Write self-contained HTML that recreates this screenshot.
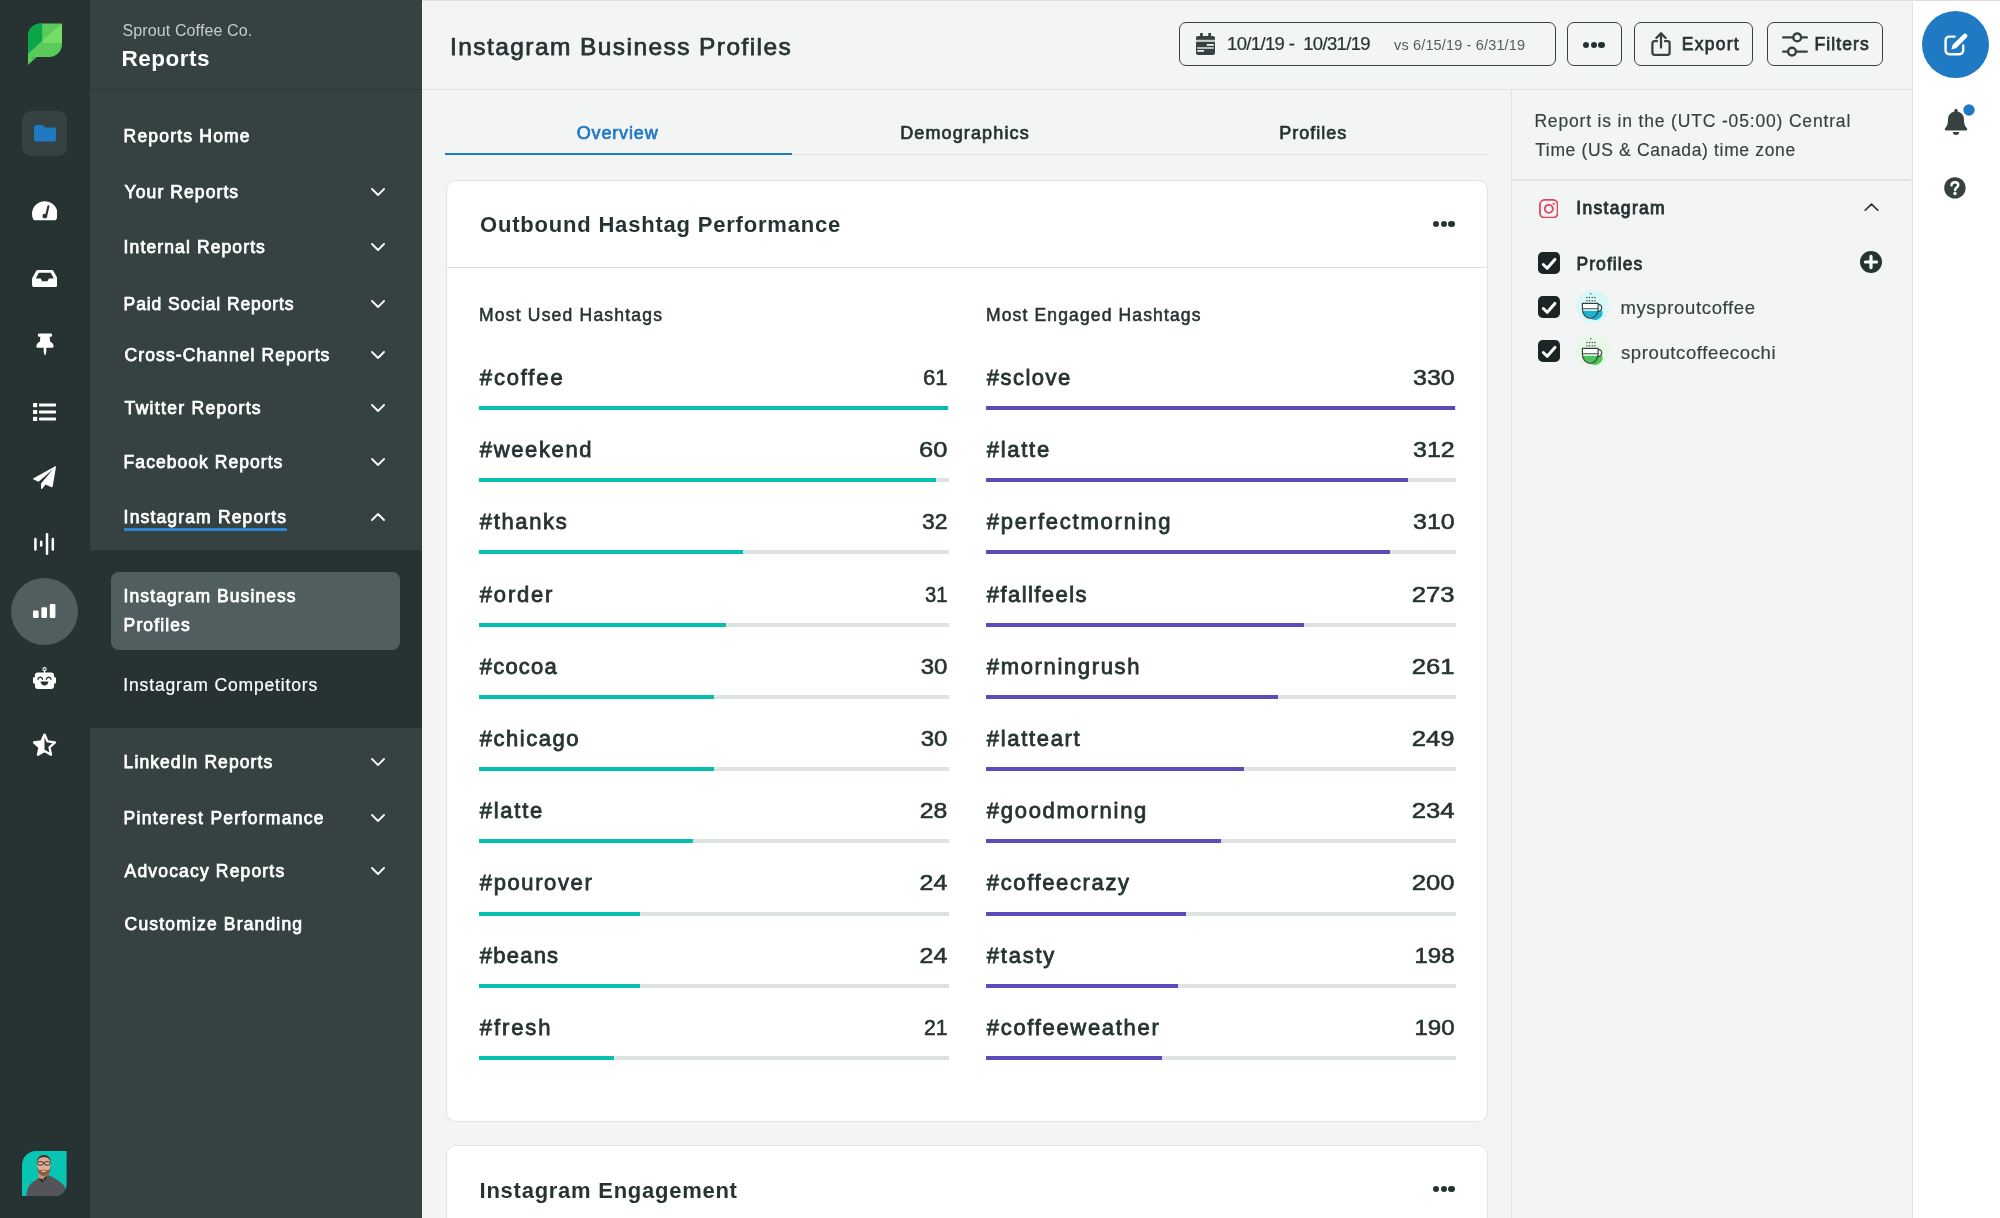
<!DOCTYPE html>
<html lang="en">
<head>
<meta charset="utf-8">
<title>Instagram Business Profiles - Reports</title>
<style>
*{box-sizing:border-box;margin:0;padding:0}
html,body{width:2000px;height:1218px;overflow:hidden;background:#f3f4f4}
body{font-family:"Liberation Sans",sans-serif;color:#273333;position:relative;will-change:transform}
.abs{position:absolute}
svg{display:block;position:absolute}
.t{position:absolute;display:block;white-space:pre;font-weight:normal;font-style:normal;text-decoration:none}
#rail{position:absolute;left:0;top:0;width:90px;height:1218px;background:#273333}
#side{position:absolute;left:90px;top:0;width:332px;height:1218px;background:#364141;color:#fff}
#side .hd{position:absolute;left:0;top:0;width:332px;height:90px;border-bottom:1px solid #2d3838}
#sub{position:absolute;left:0;top:550px;width:332px;height:178px;background:#273333}
#sub .act{position:absolute;left:21px;top:22px;width:289px;height:78px;border-radius:8px;background:#515e5f}
#main{position:absolute;left:422px;top:0;width:1490px;height:1218px;background:#f3f4f4}
#mhd{position:absolute;left:0;top:0;width:1490px;height:90px;border-bottom:1.5px solid #dee1e1;box-shadow:inset 0 1px 0 #dcdfdf}
.btn{position:absolute;top:22.400px;height:43.600px;border:1.600px solid #364141;border-radius:7px}
.card{position:absolute;left:24px;width:1042px;background:#fff;border:1px solid #e0e3e3;border-radius:10px}
.card>*{margin:-1px 0 0 -1px}
.dots{position:absolute;width:22px;height:6.4px}
.dots i{position:absolute;top:0;width:6.4px;height:6.4px;border-radius:50%;background:#273333}
.dots i:nth-child(1){left:0}.dots i:nth-child(2){left:7.6px}.dots i:nth-child(3){left:15.2px}
.hr{position:absolute;height:1px;background:#dee1e1}
.trk{position:absolute;width:469.600px;height:4px;background:#dfe2e2}
.bar{position:absolute;height:4px}
.bar.g{background:#06c0af}.bar.p{background:#5c4cba}
#fp{position:absolute;left:1089px;top:90px;width:401px;height:1128px;border-left:1.500px solid #dfe2e2}
#rr{position:absolute;left:1912px;top:0;width:88px;height:1218px;background:#fff;border-left:1.5px solid #e3e6e6;box-shadow:inset 0 1px 0 #dcdfdf}
</style>
</head>
<body>
<nav id="rail" aria-label="Primary">
  <svg style="left:27px;top:23px" width="36" height="43" viewBox="0 0 36 43">
    <path d="M1 42 V13.5 C1 6 6.5 0.5 14 0.5 H35 V21 C35 28.5 29.5 34 22 34 H9.5 Z" fill="#59cb59"/>
    <path d="M1 31 V13.5 C1 6 6.5 0.5 14 0.5 H15.2 V17.6 Z" fill="#0ca54a"/>
    <path d="M15.2 17.6 L35 0.5 V20 H17.5 Z" fill="#75dd66"/>
    <path d="M3.5 34.2 H9.6 L7.4 36.2 Z" fill="#2bb656"/>
  </svg>
  <div class="abs" style="left:22px;top:111px;width:45px;height:45px;border-radius:9px;background:#364141"></div>
  <svg style="left:33.5px;top:125px" width="22" height="16.5" viewBox="0 0 23 17"><path d="M2 0 H8.2 C8.8 0 9.3 .2 9.7 .6 L11.6 2.6 H21 C22.1 2.6 23 3.500 23 4.600 V15 C23 16.100 22.100 17 21 17 H2 C.9 17 0 16.100 0 15 V2 C0 .9 .9 0 2 0 Z" fill="#2079c3"/></svg>
  <svg style="left:31.7px;top:201px" width="25.6" height="19.6" viewBox="0 0 27 20"><path d="M13.5 0 C6 0 0 6 0 13.4 C0 15.4 .45 17.3 1.25 19 C1.5 19.6 2.1 20 2.800 20 H24.200 C24.900 20 25.500 19.600 25.750 19 C26.550 17.300 27 15.400 27 13.400 C27 6 21 0 13.500 0 Z" fill="#fff"/><path d="M17.3 5.2 L15.2 14.2" stroke="#273333" stroke-width="2.2" stroke-linecap="round"/><circle cx="13.6" cy="15.6" r="2.6" fill="#273333"/></svg>
  <svg style="left:31.7px;top:269.5px" width="25.6" height="17" viewBox="0 0 27 18"><path d="M6.2 0 H20.8 C21.6 0 22.3 .4 22.7 1.1 L26.6 8.3 C26.9 8.8 27 9.3 27 9.8 V15.800 C27 17 26 18 24.800 18 H2.200 C1 18 0 17 0 15.800 V9.800 C0 9.300 .1 8.800 .4 8.300 L4.300 1.100 C4.700 .4 5.400 0 6.200 0 Z M7.200 3 L4 9 H9.200 L10.700 11.800 H16.300 L17.800 9 H23 L19.800 3 Z" fill="#fff" fill-rule="evenodd"/></svg>
  <svg style="left:35.5px;top:333px" width="18" height="22.6" viewBox="0 0 19 23"><path d="M3.4 0 H15.6 C16.4 0 17 .6 17 1.4 V2.2 C17 3 16.4 3.6 15.6 3.6 H14.4 L14.9 8.6 C17 9.7 18.6 11.600 18.600 13.900 C18.600 14.600 18.100 15.100 17.400 15.100 H10.900 V19.600 L9.900 22.700 C9.800 23.100 9.200 23.100 9.100 22.700 L8.100 19.600 V15.100 H1.600 C.9 15.100 .4 14.600 .4 13.900 C.4 11.600 2 9.700 4.100 8.600 L4.600 3.600 H3.400 C2.600 3.600 2 3 2 2.200 V1.400 C2 .6 2.600 0 3.400 0 Z" fill="#fff"/></svg>
  <svg style="left:33px;top:403px" width="23" height="18" viewBox="0 0 23 18"><g fill="#fff"><rect x="0" y="0" width="4.2" height="4.2" rx=".6"/><rect x="6" y=".6" width="17" height="3" rx=".7"/><rect x="0" y="6.9" width="4.2" height="4.2" rx=".6"/><rect x="6" y="7.5" width="17" height="3" rx=".7"/><rect x="0" y="13.8" width="4.2" height="4.2" rx=".6"/><rect x="6" y="14.4" width="17" height="3" rx=".7"/></g></svg>
  <svg style="left:33px;top:466px" width="23" height="23" viewBox="0 0 23 23"><path d="M22.3 .2 C22.7 0 23.1 .3 23 .8 L19.7 20.6 C19.6 21.1 19.1 21.3 18.7 21.2 L12.5 18.6 L9.2 22.7 C8.8 23.2 8 22.9 8 22.3 V17.4 L20 3.2 L5.6 15.700 L.6 13.600 C0 13.300 -.1 12.500 .5 12.200 Z" fill="#fff"/></svg>
  <svg style="left:34px;top:533px" width="21" height="22" viewBox="0 0 21 22"><g stroke="#fff" stroke-width="2.5" stroke-linecap="round"><path d="M1.4 6 V16.5"/><path d="M7.2 8.8 V12.6"/><path d="M13 1.200 V20.800"/><path d="M18.800 6 V16.500"/></g></svg>
  <div class="abs" style="left:11px;top:578px;width:67px;height:67px;border-radius:50%;background:#515e5f"></div>
  <svg style="left:33px;top:604px" width="23" height="14" viewBox="0 0 23 14"><g fill="#fff"><rect x="0" y="6.6" width="5.6" height="7.4" rx="1.1"/><rect x="8.4" y="3.2" width="5.6" height="10.8" rx="1.1"/><rect x="16.800" y="0" width="5.600" height="14" rx="1.100"/></g></svg>
  <svg style="left:33px;top:667px" width="23" height="22" viewBox="0 0 23 22"><circle cx="11.5" cy="2.2" r="1.6" fill="none" stroke="#fff" stroke-width="1.1"/><path d="M11.5 3.6 V6" stroke="#fff" stroke-width="1.2"/><path d="M4.6 5.6 H18.4 C19.9 5.6 21.1 6.8 21.1 8.3 V10.2 H22 C22.6 10.2 23 10.600 23 11.200 V15.400 C23 16 22.600 16.400 22 16.400 H21.100 V19.300 C21.100 20.800 19.900 22 18.400 22 H4.600 C3.100 22 1.900 20.800 1.900 19.300 V16.400 H1 C.4 16.400 0 16 0 15.400 V11.200 C0 10.600 .4 10.200 1 10.200 H1.900 V8.300 C1.900 6.800 3.100 5.600 4.600 5.600 Z" fill="#fff"/><path d="M5 12.200 C5.300 10.900 6.200 10.200 7.300 10.200 C8.400 10.200 9.300 10.900 9.600 12.200" fill="none" stroke="#273333" stroke-width="1.4" stroke-linecap="round"/><path d="M13.400 12.200 C13.700 10.900 14.600 10.200 15.700 10.200 C16.800 10.200 17.700 10.900 18 12.200" fill="none" stroke="#273333" stroke-width="1.4" stroke-linecap="round"/><path d="M7.600 14.600 H15.400 C15.400 16.900 13.700 18.600 11.500 18.600 C9.300 18.600 7.600 16.900 7.600 14.600 Z" fill="#273333"/></svg>
  <svg style="left:32px;top:733px" width="25" height="24" viewBox="0 0 25 24"><path d="M12.5 1.600 L15.600 8.400 L23 9.300 L17.500 14.400 L19 21.700 L12.500 18 L6 21.700 L7.500 14.400 L2 9.300 L9.400 8.400 Z" fill="none" stroke="#fff" stroke-width="2.3" stroke-linejoin="round"/><path d="M12.500 1.600 L9.400 8.400 L2 9.300 L7.500 14.400 L6 21.700 L12.500 18 Z" fill="#fff"/></svg>
  <svg style="left:22px;top:1151px" width="45" height="45" viewBox="0 0 45 45"><defs><clipPath id="avc"><path d="M14 0 H44.600 V33 C44.600 39.600 39.200 45 32.600 45 H0 V14 C0 6.300 6.300 0 14 0 Z"/></clipPath></defs><g clip-path="url(#avc)"><rect width="45" height="45" fill="#08c4b2"/><path d="M4.300 45 C4.800 39 6 35.500 9 32.500 L16.500 27 L21 29.500 L26.500 24 L33 27.500 C38 30.500 41.500 33.500 43.600 37 L43.600 45 Z" fill="#55545a"/><path d="M16.600 21 H26.500 V25 L21 30 L16.600 27 Z" fill="#c98f72"/><path d="M15.800 27.600 L20.800 31.800 L21.400 28 Z M26.800 23.600 L22 30.800 L21.600 27 Z" fill="#2f2e33"/><ellipse cx="21.800" cy="13.200" rx="6.900" ry="8.600" fill="#dfae95"/><path d="M14.900 11.600 C14 1.500 29.800 1.500 28.800 11.600 C27.400 7 25 6.200 21.800 6.200 C18.600 6.200 16.400 7 14.900 11.600 Z" fill="#49342a"/><path d="M15 14.500 C14.600 28.500 29.400 28.500 28.700 14.500 C28 18.500 26.500 19.600 25 19.200 C23 18.600 20.600 18.600 18.600 19.200 C17.100 19.600 15.700 18.500 15 14.500 Z" fill="#8c5b3e"/><path d="M19.200 19.800 C20.600 21.400 23 21.400 24.400 19.800 Z" fill="#f3e6df"/><rect x="15.600" y="10.600" width="5.400" height="3.500" rx="1.300" fill="none" stroke="#2b2b2e" stroke-width=".9"/><rect x="22.600" y="10.600" width="5.400" height="3.500" rx="1.300" fill="none" stroke="#2b2b2e" stroke-width=".9"/><path d="M21 12 H22.600" stroke="#2b2b2e" stroke-width=".8"/></g></svg>
</nav>
<aside id="side">
  <div class="hd"><p class="t" style="font-size:16px;line-height:21px;left:32.50px;top:19.71px;letter-spacing:0.120px;color:#c5cccc;">Sprout Coffee Co.</p><h2 class="t" style="font-size:22.5px;line-height:29px;left:31.50px;top:43.95px;letter-spacing:0.500px;font-weight:bold;color:#fff;">Reports</h2></div>
  <a class="t nav" style="font-size:17.5px;line-height:23px;left:33.62px;top:125.04px;letter-spacing:1.197px;color:#fff;-webkit-text-stroke:0.75px #fff;">Reports Home</a>
  <a class="t nav" style="font-size:17.5px;line-height:23px;left:34.62px;top:180.54px;letter-spacing:1.091px;color:#fff;-webkit-text-stroke:0.75px #fff;">Your Reports</a>
  <svg style="left:281px;top:187.5px" width="14" height="8" viewBox="0 0 14 8"><path d="M1 1 L7 7 L13 1" fill="none" stroke="#fff" stroke-width="1.8" stroke-linecap="round" stroke-linejoin="round"/></svg>
  <a class="t nav" style="font-size:17.5px;line-height:23px;left:33.62px;top:236.04px;letter-spacing:1.116px;color:#fff;-webkit-text-stroke:0.75px #fff;">Internal Reports</a>
  <svg style="left:281px;top:243px" width="14" height="8" viewBox="0 0 14 8"><path d="M1 1 L7 7 L13 1" fill="none" stroke="#fff" stroke-width="1.8" stroke-linecap="round" stroke-linejoin="round"/></svg>
  <a class="t nav" style="font-size:17.5px;line-height:23px;left:33.62px;top:292.54px;letter-spacing:0.906px;color:#fff;-webkit-text-stroke:0.75px #fff;">Paid Social Reports</a>
  <svg style="left:281px;top:299.5px" width="14" height="8" viewBox="0 0 14 8"><path d="M1 1 L7 7 L13 1" fill="none" stroke="#fff" stroke-width="1.8" stroke-linecap="round" stroke-linejoin="round"/></svg>
  <a class="t nav" style="font-size:17.5px;line-height:23px;left:34.62px;top:343.79px;letter-spacing:1.095px;color:#fff;-webkit-text-stroke:0.75px #fff;">Cross-Channel Reports</a>
  <svg style="left:281px;top:350.75px" width="14" height="8" viewBox="0 0 14 8"><path d="M1 1 L7 7 L13 1" fill="none" stroke="#fff" stroke-width="1.8" stroke-linecap="round" stroke-linejoin="round"/></svg>
  <a class="t nav" style="font-size:17.5px;line-height:23px;left:34.62px;top:396.79px;letter-spacing:1.309px;color:#fff;-webkit-text-stroke:0.75px #fff;">Twitter Reports</a>
  <svg style="left:281px;top:403.75px" width="14" height="8" viewBox="0 0 14 8"><path d="M1 1 L7 7 L13 1" fill="none" stroke="#fff" stroke-width="1.8" stroke-linecap="round" stroke-linejoin="round"/></svg>
  <a class="t nav" style="font-size:17.5px;line-height:23px;left:33.62px;top:450.54px;letter-spacing:1.051px;color:#fff;-webkit-text-stroke:0.75px #fff;">Facebook Reports</a>
  <svg style="left:281px;top:457.5px" width="14" height="8" viewBox="0 0 14 8"><path d="M1 1 L7 7 L13 1" fill="none" stroke="#fff" stroke-width="1.8" stroke-linecap="round" stroke-linejoin="round"/></svg>
  <a class="t nav" style="font-size:17.5px;line-height:23px;left:33.62px;top:505.54px;letter-spacing:1.160px;color:#fff;-webkit-text-stroke:0.75px #fff;">Instagram Reports</a>
  <svg style="left:281px;top:512.5px" width="14" height="8" viewBox="0 0 14 8"><path d="M1 7 L7 1 L13 7" fill="none" stroke="#fff" stroke-width="1.8" stroke-linecap="round" stroke-linejoin="round"/></svg>
  <a class="t nav" style="font-size:17.5px;line-height:23px;left:33.62px;top:750.94px;letter-spacing:1.083px;color:#fff;-webkit-text-stroke:0.75px #fff;">LinkedIn Reports</a>
  <svg style="left:281px;top:757.9px" width="14" height="8" viewBox="0 0 14 8"><path d="M1 1 L7 7 L13 1" fill="none" stroke="#fff" stroke-width="1.8" stroke-linecap="round" stroke-linejoin="round"/></svg>
  <a class="t nav" style="font-size:17.5px;line-height:23px;left:33.62px;top:807.04px;letter-spacing:1.286px;color:#fff;-webkit-text-stroke:0.75px #fff;">Pinterest Performance</a>
  <svg style="left:281px;top:814px" width="14" height="8" viewBox="0 0 14 8"><path d="M1 1 L7 7 L13 1" fill="none" stroke="#fff" stroke-width="1.8" stroke-linecap="round" stroke-linejoin="round"/></svg>
  <a class="t nav" style="font-size:17.5px;line-height:23px;left:34.62px;top:860.04px;letter-spacing:1.169px;color:#fff;-webkit-text-stroke:0.75px #fff;">Advocacy Reports</a>
  <svg style="left:281px;top:867px" width="14" height="8" viewBox="0 0 14 8"><path d="M1 1 L7 7 L13 1" fill="none" stroke="#fff" stroke-width="1.8" stroke-linecap="round" stroke-linejoin="round"/></svg>
  <a class="t nav" style="font-size:17.5px;line-height:23px;left:34.62px;top:913.04px;letter-spacing:1.168px;color:#fff;-webkit-text-stroke:0.75px #fff;">Customize Branding</a>
  <div class="abs" style="left:34px;top:527.500px;width:163px;height:3px;background:#2b87d3"></div>
  <div id="sub"><div class="act"></div><a class="t nav" style="font-size:17.5px;line-height:23px;left:33.62px;top:34.74px;letter-spacing:1.078px;color:#fff;-webkit-text-stroke:0.75px #fff;">Instagram Business</a><a class="t nav" style="font-size:17.5px;line-height:23px;left:33.62px;top:63.74px;letter-spacing:1.128px;color:#fff;-webkit-text-stroke:0.75px #fff;">Profiles</a><a class="t nav" style="font-size:17.5px;line-height:23px;left:33.35px;top:123.74px;letter-spacing:0.840px;color:#fff;-webkit-text-stroke:0.2px #fff;">Instagram Competitors</a></div>
</aside>
<main id="main">
  <header id="mhd"><h1 class="t" style="font-size:24.5px;line-height:32px;left:28.07px;top:31.11px;letter-spacing:1.425px;color:#273333;-webkit-text-stroke:0.75px #273333;">Instagram Business Profiles</h1>
    <div class="btn" style="left:757px;width:376.500px">
      <svg style="left:15.500px;top:9.200px" width="19" height="22" viewBox="0 0 19 22"><path d="M4.100 0 H6.800 V2.900 H12.300 V0 H15 V2.900 H17 C18.100 2.900 19 3.800 19 4.900 V20 C19 21.100 18.100 22 17 22 H2 C.9 22 0 21.100 0 20 V4.900 C0 3.800 .9 2.900 2 2.900 H4.100 Z" fill="#364141"/><rect x="0" y="6.800" width="19" height="2.100" fill="#c9cdcd"/><rect x="10.800" y="11" width="7" height="1.800" fill="#f1f2f2"/><rect x="1.200" y="14.100" width="16.600" height="1.800" fill="#c9cdcd"/><rect x="1.200" y="17" width="6.900" height="1.800" fill="#eceeee"/></svg>
      <span class="t" style="font-size:18.5px;line-height:24px;left:47.00px;top:8.79px;letter-spacing:-0.652px;color:#273333;-webkit-text-stroke:0.2px #273333;">10/1/19 -  10/31/19</span><span class="t" style="font-size:14.5px;line-height:19px;left:214.00px;top:12.68px;letter-spacing:0.152px;color:#515e5f;">vs 6/15/19 - 6/31/19</span>
    </div>
    <div class="btn" style="left:1145px;width:55px"><div class="dots" style="left:15px;top:18.500px"><i></i><i></i><i></i></div></div>
    <div class="btn" style="left:1212px;width:119px">
      <svg style="left:15.800px;top:8.300px" width="20" height="24" viewBox="0 0 20 24"><g fill="none" stroke="#364141" stroke-width="2.300" stroke-linecap="round" stroke-linejoin="round"><path d="M6 9.200 H3.400 C2.300 9.200 1.400 10.100 1.400 11.200 V20.800 C1.400 21.900 2.300 22.800 3.400 22.800 H16.600 C17.700 22.800 18.600 21.900 18.600 20.800 V11.200 C18.600 10.100 17.700 9.200 16.600 9.200 H14"/><path d="M10 15.600 V1.600"/><path d="M5.400 6 L10 1.400 L14.600 6"/></g></svg>
      <span class="t" style="font-size:17.5px;line-height:23px;left:46.78px;top:9.54px;letter-spacing:1.267px;color:#273333;-webkit-text-stroke:0.75px #273333;">Export</span>
    </div>
    <div class="btn" style="left:1345px;width:116px">
      <svg style="left:13.600px;top:8.400px" width="26" height="25" viewBox="0 0 26 25"><g fill="none" stroke="#364141" stroke-width="2.400" stroke-linecap="round"><path d="M1.200 5.400 H11.200 M19.200 5.400 H24.800"/><circle cx="15.200" cy="5.400" r="3.900"/><path d="M1.200 19.600 H6 M14 19.600 H24.800"/><circle cx="10" cy="19.600" r="3.900"/></g></svg>
      <span class="t" style="font-size:17.5px;line-height:23px;left:46.58px;top:9.54px;letter-spacing:1.094px;color:#273333;-webkit-text-stroke:0.75px #273333;">Filters</span>
    </div>
  </header>
  <div class="hr" style="left:23px;top:154px;width:1043px"></div>
  <div class="abs" style="left:23px;top:153px;width:347px;height:2px;background:#2079c3"></div>
  <a class="t" style="font-size:18px;line-height:23px;left:154.75px;top:121.76px;letter-spacing:0.841px;color:#2079c3;-webkit-text-stroke:0.7px #2079c3;">Overview</a><a class="t" style="font-size:18px;line-height:23px;left:478.15px;top:121.76px;letter-spacing:1.132px;color:#273333;-webkit-text-stroke:0.7px #273333;">Demographics</a><a class="t" style="font-size:18px;line-height:23px;left:857.35px;top:121.76px;letter-spacing:0.983px;color:#273333;-webkit-text-stroke:0.7px #273333;">Profiles</a>
  <section class="card" style="top:180px;height:942px">
    <h2 class="t" style="font-size:22px;line-height:29px;left:34.00px;top:29.88px;letter-spacing:0.802px;font-weight:bold;color:#273333;">Outbound Hashtag Performance</h2>
    <div class="dots" style="left:987px;top:41px"><i></i><i></i><i></i></div>
    <div class="hr" style="left:0;top:87px;width:1042px"></div>
    <h3 class="t" style="font-size:17.5px;line-height:23px;left:32.97px;top:123.84px;letter-spacing:1.210px;color:#273333;-webkit-text-stroke:0.55px #273333;">Most Used Hashtags</h3><h3 class="t" style="font-size:17.5px;line-height:23px;left:540.02px;top:123.84px;letter-spacing:1.140px;color:#273333;-webkit-text-stroke:0.55px #273333;">Most Engaged Hashtags</h3>
    <b class="t lab" style="font-size:22px;line-height:29px;left:33.80px;top:182.88px;letter-spacing:1.844px;color:#273333;-webkit-text-stroke:0.8px #273333;">#coffee</b><span class="t val" style="font-size:22px;line-height:29px;left:476.69px;top:182.88px;width:24.97px;transform:scaleX(1.0048);transform-origin:100% 50%;color:#273333;-webkit-text-stroke:0.55px #273333;">61</span>
    <div class="trk" style="left:33.300px;top:226.0px"></div><div class="bar g" style="left:33.300px;top:226.0px;width:468.7px"></div>
    <b class="t lab" style="font-size:22px;line-height:29px;left:33.80px;top:255.10px;letter-spacing:1.634px;color:#273333;-webkit-text-stroke:0.8px #273333;">#weekend</b><span class="t val" style="font-size:22px;line-height:29px;left:476.78px;top:255.10px;width:24.97px;transform:scaleX(1.1604);transform-origin:100% 50%;color:#273333;-webkit-text-stroke:0.55px #273333;">60</span>
    <div class="trk" style="left:33.300px;top:298.2px"></div><div class="bar g" style="left:33.300px;top:298.2px;width:456.7px"></div>
    <b class="t lab" style="font-size:22px;line-height:29px;left:33.80px;top:327.32px;letter-spacing:1.641px;color:#273333;-webkit-text-stroke:0.8px #273333;">#thanks</b><span class="t val" style="font-size:22px;line-height:29px;left:476.79px;top:327.32px;width:24.97px;transform:scaleX(1.0450);transform-origin:100% 50%;color:#273333;-webkit-text-stroke:0.55px #273333;">32</span>
    <div class="trk" style="left:33.300px;top:370.4px"></div><div class="bar g" style="left:33.300px;top:370.4px;width:263.7px"></div>
    <b class="t lab" style="font-size:22px;line-height:29px;left:33.80px;top:399.54px;letter-spacing:1.806px;color:#273333;-webkit-text-stroke:0.8px #273333;">#order</b><span class="t val" style="font-size:22px;line-height:29px;left:476.69px;top:399.54px;width:24.97px;transform:scaleX(0.9159);transform-origin:100% 50%;color:#273333;-webkit-text-stroke:0.55px #273333;">31</span>
    <div class="trk" style="left:33.300px;top:442.7px"></div><div class="bar g" style="left:33.300px;top:442.7px;width:247.0px"></div>
    <b class="t lab" style="font-size:22px;line-height:29px;left:33.80px;top:471.76px;letter-spacing:1.199px;color:#273333;-webkit-text-stroke:0.8px #273333;">#cocoa</b><span class="t val" style="font-size:22px;line-height:29px;left:476.79px;top:471.76px;width:24.97px;transform:scaleX(1.0934);transform-origin:100% 50%;color:#273333;-webkit-text-stroke:0.55px #273333;">30</span>
    <div class="trk" style="left:33.300px;top:514.9px"></div><div class="bar g" style="left:33.300px;top:514.9px;width:234.7px"></div>
    <b class="t lab" style="font-size:22px;line-height:29px;left:33.80px;top:543.98px;letter-spacing:1.510px;color:#273333;-webkit-text-stroke:0.8px #273333;">#chicago</b><span class="t val" style="font-size:22px;line-height:29px;left:476.79px;top:543.98px;width:24.97px;transform:scaleX(1.0934);transform-origin:100% 50%;color:#273333;-webkit-text-stroke:0.55px #273333;">30</span>
    <div class="trk" style="left:33.300px;top:587.1px"></div><div class="bar g" style="left:33.300px;top:587.1px;width:234.7px"></div>
    <b class="t lab" style="font-size:22px;line-height:29px;left:33.80px;top:616.20px;letter-spacing:1.723px;color:#273333;-webkit-text-stroke:0.8px #273333;">#latte</b><span class="t val" style="font-size:22px;line-height:29px;left:476.78px;top:616.20px;width:24.97px;transform:scaleX(1.1267);transform-origin:100% 50%;color:#273333;-webkit-text-stroke:0.55px #273333;">28</span>
    <div class="trk" style="left:33.300px;top:659.3px"></div><div class="bar g" style="left:33.300px;top:659.3px;width:213.7px"></div>
    <b class="t lab" style="font-size:22px;line-height:29px;left:33.80px;top:688.42px;letter-spacing:1.608px;color:#273333;-webkit-text-stroke:0.8px #273333;">#pourover</b><span class="t val" style="font-size:22px;line-height:29px;left:476.98px;top:688.42px;width:24.97px;transform:scaleX(1.1352);transform-origin:100% 50%;color:#273333;-webkit-text-stroke:0.55px #273333;">24</span>
    <div class="trk" style="left:33.300px;top:731.5px"></div><div class="bar g" style="left:33.300px;top:731.5px;width:160.7px"></div>
    <b class="t lab" style="font-size:22px;line-height:29px;left:33.80px;top:760.64px;letter-spacing:1.225px;color:#273333;-webkit-text-stroke:0.8px #273333;">#beans</b><span class="t val" style="font-size:22px;line-height:29px;left:476.98px;top:760.64px;width:24.97px;transform:scaleX(1.1352);transform-origin:100% 50%;color:#273333;-webkit-text-stroke:0.55px #273333;">24</span>
    <div class="trk" style="left:33.300px;top:803.8px"></div><div class="bar g" style="left:33.300px;top:803.8px;width:160.7px"></div>
    <b class="t lab" style="font-size:22px;line-height:29px;left:33.80px;top:832.86px;letter-spacing:1.898px;color:#273333;-webkit-text-stroke:0.8px #273333;">#fresh</b><span class="t val" style="font-size:22px;line-height:29px;left:476.69px;top:832.86px;width:24.97px;transform:scaleX(0.9628);transform-origin:100% 50%;color:#273333;-webkit-text-stroke:0.55px #273333;">21</span>
    <div class="trk" style="left:33.300px;top:876.0px"></div><div class="bar g" style="left:33.300px;top:876.0px;width:134.4px"></div>
    <b class="t lab" style="font-size:22px;line-height:29px;left:540.80px;top:182.88px;letter-spacing:1.474px;color:#273333;-webkit-text-stroke:0.8px #273333;">#sclove</b><span class="t val" style="font-size:22px;line-height:29px;left:971.65px;top:182.88px;width:37.21px;transform:scaleX(1.1345);transform-origin:100% 50%;color:#273333;-webkit-text-stroke:0.55px #273333;">330</span>
    <div class="trk" style="left:540.300px;top:226.0px"></div><div class="bar p" style="left:540.300px;top:226.0px;width:469.1px"></div>
    <b class="t lab" style="font-size:22px;line-height:29px;left:540.80px;top:255.10px;letter-spacing:1.703px;color:#273333;-webkit-text-stroke:0.8px #273333;">#latte</b><span class="t val" style="font-size:22px;line-height:29px;left:971.65px;top:255.10px;width:37.21px;transform:scaleX(1.1345);transform-origin:100% 50%;color:#273333;-webkit-text-stroke:0.55px #273333;">312</span>
    <div class="trk" style="left:540.300px;top:298.2px"></div><div class="bar p" style="left:540.300px;top:298.2px;width:421.7px"></div>
    <b class="t lab" style="font-size:22px;line-height:29px;left:540.80px;top:327.32px;letter-spacing:1.769px;color:#273333;-webkit-text-stroke:0.8px #273333;">#perfectmorning</b><span class="t val" style="font-size:22px;line-height:29px;left:971.65px;top:327.32px;width:37.21px;transform:scaleX(1.1345);transform-origin:100% 50%;color:#273333;-webkit-text-stroke:0.55px #273333;">310</span>
    <div class="trk" style="left:540.300px;top:370.4px"></div><div class="bar p" style="left:540.300px;top:370.4px;width:403.7px"></div>
    <b class="t lab" style="font-size:22px;line-height:29px;left:540.80px;top:399.54px;letter-spacing:1.430px;color:#273333;-webkit-text-stroke:0.8px #273333;">#fallfeels</b><span class="t val" style="font-size:22px;line-height:29px;left:971.65px;top:399.54px;width:37.21px;transform:scaleX(1.1660);transform-origin:100% 50%;color:#273333;-webkit-text-stroke:0.55px #273333;">273</span>
    <div class="trk" style="left:540.300px;top:442.7px"></div><div class="bar p" style="left:540.300px;top:442.7px;width:317.7px"></div>
    <b class="t lab" style="font-size:22px;line-height:29px;left:540.80px;top:471.76px;letter-spacing:1.647px;color:#273333;-webkit-text-stroke:0.8px #273333;">#morningrush</b><span class="t val" style="font-size:22px;line-height:29px;left:971.65px;top:471.76px;width:37.21px;transform:scaleX(1.1660);transform-origin:100% 50%;color:#273333;-webkit-text-stroke:0.55px #273333;">261</span>
    <div class="trk" style="left:540.300px;top:514.9px"></div><div class="bar p" style="left:540.300px;top:514.9px;width:291.7px"></div>
    <b class="t lab" style="font-size:22px;line-height:29px;left:540.80px;top:543.98px;letter-spacing:1.678px;color:#273333;-webkit-text-stroke:0.8px #273333;">#latteart</b><span class="t val" style="font-size:22px;line-height:29px;left:971.65px;top:543.98px;width:37.21px;transform:scaleX(1.1660);transform-origin:100% 50%;color:#273333;-webkit-text-stroke:0.55px #273333;">249</span>
    <div class="trk" style="left:540.300px;top:587.1px"></div><div class="bar p" style="left:540.300px;top:587.1px;width:258.1px"></div>
    <b class="t lab" style="font-size:22px;line-height:29px;left:540.80px;top:616.20px;letter-spacing:1.716px;color:#273333;-webkit-text-stroke:0.8px #273333;">#goodmorning</b><span class="t val" style="font-size:22px;line-height:29px;left:971.65px;top:616.20px;width:37.21px;transform:scaleX(1.1660);transform-origin:100% 50%;color:#273333;-webkit-text-stroke:0.55px #273333;">234</span>
    <div class="trk" style="left:540.300px;top:659.3px"></div><div class="bar p" style="left:540.300px;top:659.3px;width:234.5px"></div>
    <b class="t lab" style="font-size:22px;line-height:29px;left:540.80px;top:688.42px;letter-spacing:1.625px;color:#273333;-webkit-text-stroke:0.8px #273333;">#coffeecrazy</b><span class="t val" style="font-size:22px;line-height:29px;left:971.65px;top:688.42px;width:37.21px;transform:scaleX(1.1660);transform-origin:100% 50%;color:#273333;-webkit-text-stroke:0.55px #273333;">200</span>
    <div class="trk" style="left:540.300px;top:731.5px"></div><div class="bar p" style="left:540.300px;top:731.5px;width:199.5px"></div>
    <b class="t lab" style="font-size:22px;line-height:29px;left:540.80px;top:760.64px;letter-spacing:1.761px;color:#273333;-webkit-text-stroke:0.8px #273333;">#tasty</b><span class="t val" style="font-size:22px;line-height:29px;left:971.65px;top:760.64px;width:37.21px;transform:scaleX(1.0966);transform-origin:100% 50%;color:#273333;-webkit-text-stroke:0.55px #273333;">198</span>
    <div class="trk" style="left:540.300px;top:803.8px"></div><div class="bar p" style="left:540.300px;top:803.8px;width:191.4px"></div>
    <b class="t lab" style="font-size:22px;line-height:29px;left:540.80px;top:832.86px;letter-spacing:1.684px;color:#273333;-webkit-text-stroke:0.8px #273333;">#coffeeweather</b><span class="t val" style="font-size:22px;line-height:29px;left:971.65px;top:832.86px;width:37.21px;transform:scaleX(1.0966);transform-origin:100% 50%;color:#273333;-webkit-text-stroke:0.55px #273333;">190</span>
    <div class="trk" style="left:540.300px;top:876.0px"></div><div class="bar p" style="left:540.300px;top:876.0px;width:176.2px"></div>
  </section>
  <section class="card" style="top:1145px;height:200px"><h2 class="t" style="font-size:22px;line-height:29px;left:33.60px;top:30.88px;letter-spacing:0.739px;font-weight:bold;color:#273333;">Instagram Engagement</h2><div class="dots" style="left:987px;top:41px"><i></i><i></i><i></i></div></section>
  <aside id="fp">
    <p class="t" style="font-size:17.5px;line-height:23px;left:22.38px;top:19.94px;letter-spacing:0.833px;color:#364141;-webkit-text-stroke:0.15px #364141;">Report is in the (UTC -05:00) Central</p><p class="t" style="font-size:17.5px;line-height:23px;left:23.17px;top:48.94px;letter-spacing:0.648px;color:#364141;-webkit-text-stroke:0.15px #364141;">Time (US &amp; Canada) time zone</p>
    <div class="abs" style="left:0;top:89px;width:399px;height:1.500px;background:#e1e4e4"></div>
    <svg style="left:26.500px;top:108.800px" width="19.600" height="19.600" viewBox="0 0 20 20"><rect x="1" y="1" width="18" height="18" rx="4.600" fill="none" stroke="#e4405f" stroke-width="1.800"/><circle cx="10" cy="10" r="4.100" fill="none" stroke="#e4405f" stroke-width="1.800"/><circle cx="15.100" cy="4.900" r="1.150" fill="#e4405f"/></svg>
    <h3 class="t" style="font-size:17.5px;line-height:23px;left:64.33px;top:107.14px;letter-spacing:1.315px;color:#273333;-webkit-text-stroke:0.85px #273333;">Instagram</h3>
    <svg style="left:351.500px;top:113px" width="15" height="8.400" viewBox="0 0 16 9"><path d="M1.200 7.800 L8 1.200 L14.800 7.800" fill="none" stroke="#273333" stroke-width="1.800" stroke-linecap="round" stroke-linejoin="round"/></svg>
    <svg style="left:25.9px;top:161.6px" width="22" height="22" viewBox="0 0 22 22"><rect width="22" height="22" rx="4.800" fill="#1b2525"/><path d="M5.300 12.500 L9.200 16.300 L16.900 7.400" fill="none" stroke="#fff" stroke-width="3" stroke-linecap="round" stroke-linejoin="round"/></svg><label class="t" style="font-size:17.5px;line-height:23px;left:64.50px;top:162.64px;letter-spacing:1.057px;color:#273333;-webkit-text-stroke:0.8px #273333;">Profiles</label>
    <svg style="left:347.500px;top:161px" width="22" height="22" viewBox="0 0 22 22"><circle cx="11" cy="11" r="11" fill="#273333"/><path d="M11 5.400 V16.600 M5.400 11 H16.600" stroke="#fff" stroke-width="3.200" stroke-linecap="round"/></svg>
    <svg style="left:25.9px;top:206px" width="22" height="22" viewBox="0 0 22 22"><rect width="22" height="22" rx="4.800" fill="#1b2525"/><path d="M5.300 12.500 L9.200 16.300 L16.900 7.400" fill="none" stroke="#fff" stroke-width="3" stroke-linecap="round" stroke-linejoin="round"/></svg><svg style="left:64.3px;top:200.3px" width="33" height="33" viewBox="0 0 33 33"><circle cx="16.500" cy="16.500" r="16.500" fill="#d9f7f8"/><path d="M12.200 20.800 H26.350 A7.400 7.400 0 0 1 12.050 24.600 Z" fill="#19b3d3"/><path d="M6.400 13.300 H22.100 V19 C22.100 24.400 18.600 28.300 14.250 28.300 C9.900 28.300 6.400 24.400 6.400 19 Z" fill="#fdffff"/><path d="M6.800 20.800 H21.700 C21.100 25 18 27.800 14.250 27.800 C10.500 27.800 7.400 25 6.800 20.800 Z" fill="#19b3d3"/><path d="M6.400 13.300 H22.100 V19 C22.100 24.400 18.600 28.300 14.250 28.300 C9.900 28.300 6.400 24.400 6.400 19 Z M6.400 18.700 H22.100" fill="none" stroke="#364141" stroke-width="1.150" stroke-linejoin="round"/><path d="M22.100 14.700 C26.900 14 27.100 21 21.700 21.500" fill="none" stroke="#364141" stroke-width="1.150"/><g fill="#364141"><circle cx="14.800" cy="3.800" r=".72"/><circle cx="10.9" cy="7.5" r=".72"/><circle cx="13.5" cy="7.5" r=".72"/><circle cx="16.2" cy="7.5" r=".72"/><circle cx="18.9" cy="7.5" r=".72"/><circle cx="10.9" cy="10.7" r=".72"/><circle cx="13.5" cy="10.7" r=".72"/><circle cx="16.2" cy="10.7" r=".72"/><circle cx="18.9" cy="10.7" r=".72"/></g></svg><label class="t" style="font-size:18.5px;line-height:24px;left:108.38px;top:205.89px;letter-spacing:0.661px;color:#364141;-webkit-text-stroke:0.15px #364141;">mysproutcoffee</label>
    <svg style="left:25.9px;top:250.3px" width="22" height="22" viewBox="0 0 22 22"><rect width="22" height="22" rx="4.800" fill="#1b2525"/><path d="M5.300 12.500 L9.200 16.300 L16.900 7.400" fill="none" stroke="#fff" stroke-width="3" stroke-linecap="round" stroke-linejoin="round"/></svg><svg style="left:64.3px;top:245px" width="33" height="33" viewBox="0 0 33 33"><circle cx="16.500" cy="16.500" r="16.500" fill="#e8f7e6"/><path d="M12.200 20.800 H26.350 A7.400 7.400 0 0 1 12.050 24.600 Z" fill="#4ec556"/><path d="M6.400 13.300 H22.100 V19 C22.100 24.400 18.600 28.300 14.250 28.300 C9.900 28.300 6.400 24.400 6.400 19 Z" fill="#fdffff"/><path d="M6.800 20.800 H21.700 C21.100 25 18 27.800 14.250 27.800 C10.500 27.800 7.400 25 6.800 20.800 Z" fill="#4ec556"/><path d="M6.400 13.300 H22.100 V19 C22.100 24.400 18.600 28.300 14.250 28.300 C9.900 28.300 6.400 24.400 6.400 19 Z M6.400 18.700 H22.100" fill="none" stroke="#364141" stroke-width="1.150" stroke-linejoin="round"/><path d="M22.100 14.700 C26.900 14 27.100 21 21.700 21.500" fill="none" stroke="#364141" stroke-width="1.150"/><g fill="#364141"><circle cx="14.800" cy="3.800" r=".72"/><circle cx="10.9" cy="7.5" r=".72"/><circle cx="13.5" cy="7.5" r=".72"/><circle cx="16.2" cy="7.5" r=".72"/><circle cx="18.9" cy="7.5" r=".72"/><circle cx="10.9" cy="10.7" r=".72"/><circle cx="13.5" cy="10.7" r=".72"/><circle cx="16.2" cy="10.7" r=".72"/><circle cx="18.9" cy="10.7" r=".72"/></g></svg><label class="t" style="font-size:18.5px;line-height:24px;left:108.98px;top:250.59px;letter-spacing:0.618px;color:#364141;-webkit-text-stroke:0.15px #364141;">sproutcoffeecochi</label>
  </aside>
</main>
<aside id="rr">
  <div class="abs" style="left:8.500px;top:11px;width:67px;height:67px;border-radius:50%;background:#2079c3"></div>
  <svg style="left:30.500px;top:31.700px" width="25" height="24" viewBox="0 0 25 24"><path d="M10.600 4.600 H5.200 C3.200 4.600 1.600 6.200 1.600 8.200 V18.600 C1.600 20.600 3.200 22.200 5.200 22.200 H15.600 C17.600 22.200 19.200 20.600 19.200 18.600 V13.400" fill="none" stroke="#fff" stroke-width="2.400" stroke-linecap="round"/><path d="M19.400 2.200 C20.300 1.300 21.800 1.300 22.700 2.200 C23.600 3.100 23.600 4.600 22.700 5.500 L12 16.200 L7.400 17.400 L8.600 12.800 Z" fill="#fff"/></svg>
  <svg style="left:30.500px;top:109.300px" width="24" height="26" viewBox="0 0 24 26"><path d="M12 0 C12.900 0 13.600 .7 13.600 1.600 V2.500 C17.300 3.200 20 6.400 20 10.400 C20 15.400 21.200 17.400 22.900 19.200 C23.700 20 23.100 21.400 22 21.400 H2 C.9 21.400 .3 20 1.100 19.200 C2.800 17.400 4 15.400 4 10.400 C4 6.400 6.700 3.200 10.400 2.500 V1.600 C10.400 .7 11.100 0 12 0 Z" fill="#364141"/><path d="M8.800 23 H15.200 C15.200 24.700 13.800 26 12 26 C10.200 26 8.800 24.700 8.800 23 Z" fill="#364141"/></svg>
  <svg style="left:49.600px;top:104px" width="12" height="12" viewBox="0 0 12 12"><circle cx="6" cy="6" r="5.700" fill="#2079c3"/></svg>
  <svg style="left:31.400px;top:177.400px" width="21.800" height="21.800" viewBox="0 0 22 22"><circle cx="11" cy="11" r="10.800" fill="#364141"/><path d="M7.600 8.400 C7.600 6.400 9.100 5.200 11 5.200 C12.900 5.200 14.400 6.400 14.400 8.200 C14.400 10.600 11.200 10.600 11.200 13.100" fill="none" stroke="#fff" stroke-width="2.500" stroke-linecap="round"/><circle cx="11.100" cy="16.700" r="1.700" fill="#fff"/></svg>
</aside>
</body>
</html>
